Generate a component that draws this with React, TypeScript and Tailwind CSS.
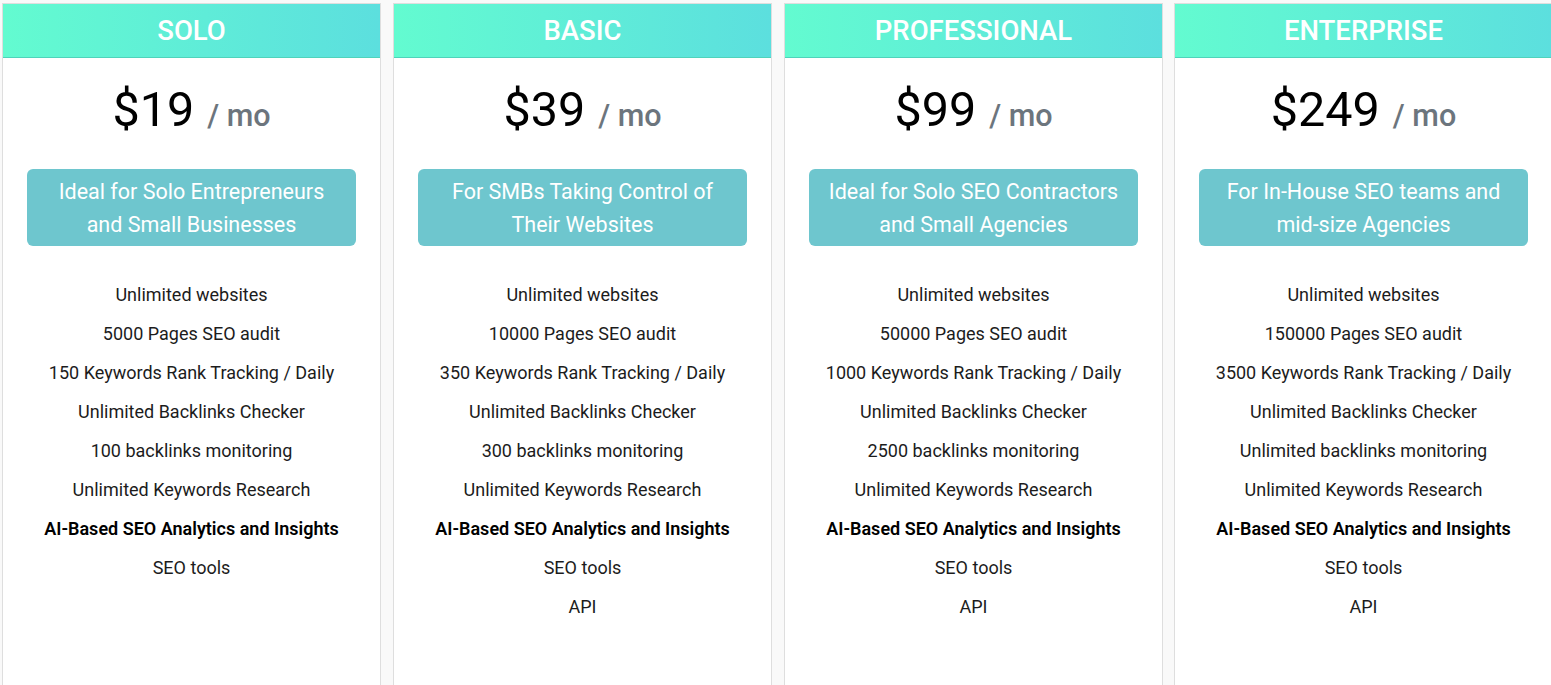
const plans = [
  {
    name: "SOLO",
    price: "$19",
    tagline: ["Ideal for Solo Entrepreneurs", "and Small Businesses"],
    features: [
      "Unlimited websites",
      "5000 Pages SEO audit",
      "150 Keywords Rank Tracking / Daily",
      "Unlimited Backlinks Checker",
      "100 backlinks monitoring",
      "Unlimited Keywords Research",
    ],
    api: false,
  },
  {
    name: "BASIC",
    price: "$39",
    tagline: ["For SMBs Taking Control of", "Their Websites"],
    features: [
      "Unlimited websites",
      "10000 Pages SEO audit",
      "350 Keywords Rank Tracking / Daily",
      "Unlimited Backlinks Checker",
      "300 backlinks monitoring",
      "Unlimited Keywords Research",
    ],
    api: true,
  },
  {
    name: "PROFESSIONAL",
    price: "$99",
    tagline: ["Ideal for Solo SEO Contractors", "and Small Agencies"],
    features: [
      "Unlimited websites",
      "50000 Pages SEO audit",
      "1000 Keywords Rank Tracking / Daily",
      "Unlimited Backlinks Checker",
      "2500 backlinks monitoring",
      "Unlimited Keywords Research",
    ],
    api: true,
  },
  {
    name: "ENTERPRISE",
    price: "$249",
    tagline: ["For In-House SEO teams and", "mid-size Agencies"],
    features: [
      "Unlimited websites",
      "150000 Pages SEO audit",
      "3500 Keywords Rank Tracking / Daily",
      "Unlimited Backlinks Checker",
      "Unlimited backlinks monitoring",
      "Unlimited Keywords Research",
    ],
    api: true,
  },
];

type Plan = (typeof plans)[number];

export default function App() {
  return (
    <div className="min-h-screen overflow-hidden bg-[#f9f9f9] pl-[2px] pt-[3px] font-['Roboto',sans-serif]">
      <div className="flex w-[1600px] gap-[12px]">
        {plans.map((plan) => (
          <PlanCard key={plan.name} plan={plan} />
        ))}
      </div>
    </div>
  );
}

function PlanCard({ plan }: { plan: Plan }) {
  return (
    <div className="flex h-[700px] w-[379px] shrink-0 flex-col border border-[#dedede] bg-white last:-ml-[1px]">
      <div className="flex h-[54px] items-center justify-center border-b border-[#4fd3bb] bg-gradient-to-r from-[#63fbd0] to-[#5cdfde] text-[27.5px] font-medium text-white">
        {plan.name}
      </div>

      <div className="mt-[28px] flex items-baseline justify-center">
        <span className="text-[48.5px] leading-none text-black">{plan.price}</span>
        <span className="ml-[13px] text-[30.5px] font-medium leading-none text-[#6c757d]">/ mo</span>
      </div>

      <div className="mx-auto mt-[34px] flex h-[77px] w-[329px] flex-col items-center justify-center rounded-md bg-[#6ec6ce] pt-[2px] text-[21.5px] leading-[33px] text-white">
        {plan.tagline.map((line) => (
          <div key={line}>{line}</div>
        ))}
      </div>

      <ul className="mt-[29px] flex flex-col items-center text-[18px] leading-[39px] text-[#1c1c1c]">
        {plan.features.map((f) => (
          <li key={f}>{f}</li>
        ))}
        <li className="font-semibold text-black">AI-Based SEO Analytics and Insights</li>
        <li>SEO tools</li>
        {plan.api && <li>API</li>}
      </ul>
    </div>
  );
}
